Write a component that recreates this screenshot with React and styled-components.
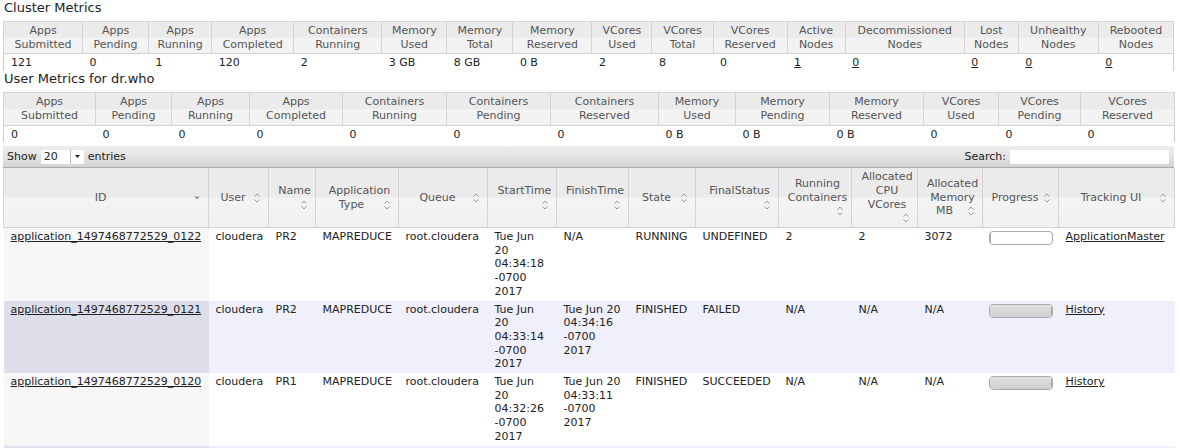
import React from 'react';
import styled, { createGlobalStyle } from 'styled-components';

const Global = createGlobalStyle`
  html, body { margin: 0; padding: 0; background: #fff; }
  body {
    font-family: "DejaVu Sans", Verdana, sans-serif;
    font-size: 11px;
    color: #222;
  }
`;

const Page = styled.div`
  padding: 0 0 0 3px;
  width: 1171px;
`;

const Title = styled.h3`
  margin: 0;
  padding: 0 0 6px 1px;
  font-size: 13px;
  font-weight: normal;
  line-height: 15px;
  color: #222;
`;

const Table = styled.table`
  border-collapse: collapse;
  table-layout: fixed;
  width: 1171px;
  line-height: 13.7px;
`;

const Col = styled.col`
  width: ${(p) => p.$w}px;
`;

const headerBg = `linear-gradient(to bottom, #ebebeb 0%, #ebebeb 48%, #f3f3f3 52%, #f1f1f1 100%)`;

const MetricTh = styled.th`
  background: ${headerBg};
  border: 1px solid #d3d3d3;
  color: #555;
  font-weight: normal;
  padding: 2px 4px;
  text-align: center;
  vertical-align: middle;
`;

const MetricTd = styled.td`
  padding: 2px 4px 1px 7px;
  text-align: left;
  border-left: ${(p) => (p.$first ? '1px solid #ccc' : 'none')};
  border-right: ${(p) => (p.$last ? '1px solid #ccc' : 'none')};
  white-space: nowrap;
`;

const Link = styled.a`
  color: #222;
  text-decoration: underline;
`;

const Toolbar = styled.div`
  display: flex;
  align-items: center;
  justify-content: space-between;
  height: 22px;
  margin-top: 4px;
  padding: 0 5px 0 4px;
  box-sizing: border-box;
  background: linear-gradient(to bottom, #ededed 0%, #e2e2e2 50%, #d3d3d3 100%);
  border-bottom: 1px solid #aaa;
  color: #222;
`;

const ToolGroup = styled.div`
  display: flex;
  align-items: center;
  gap: 4px;
`;

const SelectBox = styled.div`
  display: flex;
  align-items: stretch;
  width: 43px;
  height: 14px;
  background: #fff;
  box-sizing: border-box;
`;

const SelectValue = styled.span`
  flex: 1;
  padding-left: 3px;
  line-height: 14px;
`;

const SelectArrow = styled.span`
  width: 13px;
  border-left: 1px solid #bbb;
  display: flex;
  align-items: center;
  justify-content: center;
`;

const SearchInput = styled.div`
  width: 159px;
  height: 14px;
  background: #fff;
`;

const MainTh = styled.th`
  background: ${headerBg};
  border: 1px solid #d3d3d3;
  border-top: none;
  color: #555;
  font-weight: normal;
  padding: 2px 3px 2px 8px;
  text-align: center;
  vertical-align: middle;
`;

const SortIcon = styled.span`
  float: right;
  width: 16px;
  height: 13.7px;
  display: block;
  svg { display: block; }
`;

const Tr = styled.tr`
  background: ${(p) => (p.$even ? '#eff0fb' : '#fff')};
`;

const Td = styled.td`
  padding: 2px 7px 2px 7px;
  vertical-align: top;
  text-align: left;
  background: ${(p) => (p.$sorted ? (p.$even ? '#dddeea' : '#f6f6f6') : 'transparent')};
`;

const ProgressTrack = styled.div`
  width: 64px;
  height: 14px;
  box-sizing: border-box;
  border: 1px solid #aaa;
  border-radius: 4px;
  background: #fff;
  overflow: hidden;
  margin: 1px 0 0 -1px;
`;

const ProgressValue = styled.div`
  height: 100%;
  background: linear-gradient(to bottom, #e0e0e0, #cfcfcf);
  border-right: 1px solid #aaa;
  box-sizing: border-box;
`;

function CaratIcon() {
  return (
    <svg width="16" height="14" viewBox="0 0 16 14">
      <path d="M5.5 5.5 L8 3 L10.5 5.5" fill="none" stroke="#9a9a9a" strokeWidth="1" />
      <path d="M5.5 8.5 L8 11 L10.5 8.5" fill="none" stroke="#9a9a9a" strokeWidth="1" />
    </svg>
  );
}

function DescIcon() {
  return (
    <svg width="16" height="14" viewBox="0 0 16 14">
      <path d="M5 5.5 L11 5.5 L8 8.5 Z" fill="#9a9a9a" />
    </svg>
  );
}

const clusterCols = [
  ['Apps', 'Submitted', 79, '121'],
  ['Apps', 'Pending', 66, '0'],
  ['Apps', 'Running', 63, '1'],
  ['Apps', 'Completed', 82, '120'],
  ['Containers', 'Running', 88, '2'],
  ['Memory', 'Used', 65, '3 GB'],
  ['Memory', 'Total', 66, '8 GB'],
  ['Memory', 'Reserved', 79, '0 B'],
  ['VCores', 'Used', 60, '2'],
  ['VCores', 'Total', 61, '8'],
  ['VCores', 'Reserved', 74, '0'],
  ['Active', 'Nodes', 58, '1', true],
  ['Decommissioned', 'Nodes', 119, '0', true],
  ['Lost', 'Nodes', 54, '0', true],
  ['Unhealthy', 'Nodes', 80, '0', true],
  ['Rebooted', 'Nodes', 75, '0', true],
];

const userCols = [
  ['Apps', 'Submitted', 92, '0'],
  ['Apps', 'Pending', 76, '0'],
  ['Apps', 'Running', 78, '0'],
  ['Apps', 'Completed', 93, '0'],
  ['Containers', 'Running', 104, '0'],
  ['Containers', 'Pending', 104, '0'],
  ['Containers', 'Reserved', 108, '0'],
  ['Memory', 'Used', 77, '0 B'],
  ['Memory', 'Pending', 94, '0 B'],
  ['Memory', 'Reserved', 94, '0 B'],
  ['VCores', 'Used', 75, '0'],
  ['VCores', 'Pending', 82, '0'],
  ['VCores', 'Reserved', 94, '0'],
];

const mainCols = [
  ['ID', 205, 'desc'],
  ['User', 60],
  ['Name', 47],
  ['Application Type', 83],
  ['Queue', 89],
  ['StartTime', 69],
  ['FinishTime', 72],
  ['State', 67],
  ['FinalStatus', 83],
  ['Running Containers', 73],
  ['Allocated CPU VCores', 66],
  ['Allocated Memory MB', 65],
  ['Progress', 76],
  ['Tracking UI', 116],
];

const apps = [
  {
    id: 'application_1497468772529_0122', user: 'cloudera', name: 'PR2', type: 'MAPREDUCE',
    queue: 'root.cloudera', start: 'Tue Jun 20 04:34:18 -0700 2017', finish: 'N/A',
    state: 'RUNNING', status: 'UNDEFINED', rc: '2', cpu: '2', mem: '3072', progress: 3,
    ui: 'ApplicationMaster',
  },
  {
    id: 'application_1497468772529_0121', user: 'cloudera', name: 'PR2', type: 'MAPREDUCE',
    queue: 'root.cloudera', start: 'Tue Jun 20 04:33:14 -0700 2017',
    finish: 'Tue Jun 20 04:34:16 -0700 2017', state: 'FINISHED', status: 'FAILED',
    rc: 'N/A', cpu: 'N/A', mem: 'N/A', progress: 100, ui: 'History',
  },
  {
    id: 'application_1497468772529_0120', user: 'cloudera', name: 'PR1', type: 'MAPREDUCE',
    queue: 'root.cloudera', start: 'Tue Jun 20 04:32:26 -0700 2017',
    finish: 'Tue Jun 20 04:33:11 -0700 2017', state: 'FINISHED', status: 'SUCCEEDED',
    rc: 'N/A', cpu: 'N/A', mem: 'N/A', progress: 100, ui: 'History',
  },
  {
    id: 'application_1497468772529_0119', user: 'cloudera', name: 'PR1', type: 'MAPREDUCE',
    queue: 'root.cloudera', start: 'Tue Jun 20 04:31:40 -0700 2017',
    finish: 'Tue Jun 20 04:32:22 -0700 2017', state: 'FINISHED', status: 'SUCCEEDED',
    rc: 'N/A', cpu: 'N/A', mem: 'N/A', progress: 100, ui: 'History',
  },
];

function MetricsTable({ cols }) {
  return (
    <Table>
      <colgroup>
        {cols.map((c, i) => <Col key={i} $w={c[2]} />)}
      </colgroup>
      <thead>
        <tr>
          {cols.map((c, i) => (
            <MetricTh key={i}>{c[0]}<br />{c[1]}</MetricTh>
          ))}
        </tr>
      </thead>
      <tbody>
        <tr>
          {cols.map((c, i) => (
            <MetricTd key={i} $first={i === 0} $last={i === cols.length - 1}>
              {c[4] ? <Link href="#">{c[3]}</Link> : c[3]}
            </MetricTd>
          ))}
        </tr>
      </tbody>
    </Table>
  );
}

export default function App() {
  return (
    <Page>
      <Global />
      <Title>Cluster Metrics</Title>
      <MetricsTable cols={clusterCols} />
      <Title>User Metrics for dr.who</Title>
      <MetricsTable cols={userCols} />
      <Toolbar>
        <ToolGroup>
          <span>Show</span>
          <SelectBox>
            <SelectValue>20</SelectValue>
            <SelectArrow>
              <svg width="7" height="5" viewBox="0 0 7 5"><path d="M1 1 L6 1 L3.5 4 Z" fill="#222" /></svg>
            </SelectArrow>
          </SelectBox>
          <span>entries</span>
        </ToolGroup>
        <ToolGroup>
          <span>Search:</span>
          <SearchInput />
        </ToolGroup>
      </Toolbar>
      <Table>
        <colgroup>
          {mainCols.map((c, i) => <Col key={i} $w={c[1]} />)}
        </colgroup>
        <thead>
          <tr>
            {mainCols.map((c, i) => (
              <MainTh key={i}>
                {c[0]}
                <SortIcon>{c[2] === 'desc' ? <DescIcon /> : <CaratIcon />}</SortIcon>
              </MainTh>
            ))}
          </tr>
        </thead>
        <tbody>
          {apps.map((a, i) => {
            const even = i % 2 === 1;
            return (
              <Tr key={a.id} $even={even}>
                <Td $sorted $even={even}><Link href="#">{a.id}</Link></Td>
                <Td>{a.user}</Td>
                <Td>{a.name}</Td>
                <Td>{a.type}</Td>
                <Td>{a.queue}</Td>
                <Td>{a.start}</Td>
                <Td>{a.finish}</Td>
                <Td>{a.state}</Td>
                <Td>{a.status}</Td>
                <Td>{a.rc}</Td>
                <Td>{a.cpu}</Td>
                <Td>{a.mem}</Td>
                <Td>
                  <ProgressTrack>
                    <ProgressValue style={{ width: `${a.progress}%` }} />
                  </ProgressTrack>
                </Td>
                <Td><Link href="#">{a.ui}</Link></Td>
              </Tr>
            );
          })}
        </tbody>
      </Table>
    </Page>
  );
}
